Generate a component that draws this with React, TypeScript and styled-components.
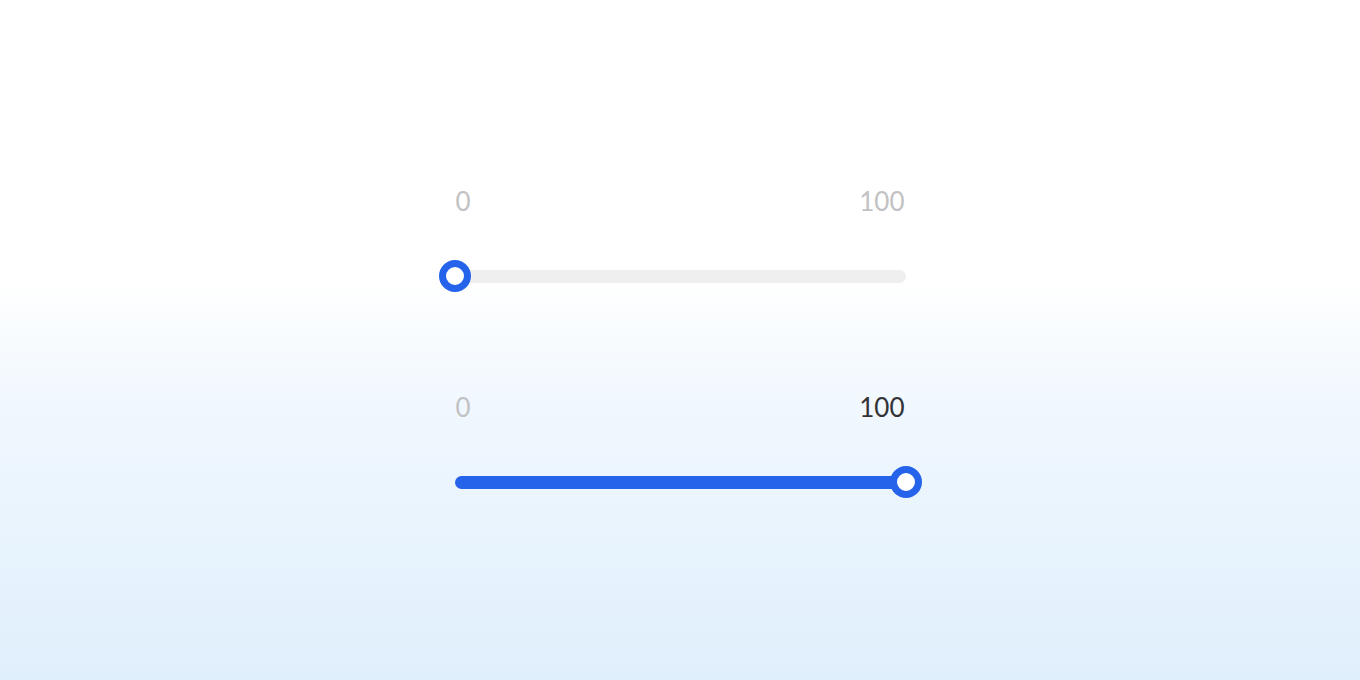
import React from "react";
import styled, { createGlobalStyle } from "styled-components";

const GlobalStyle = createGlobalStyle`
  html, body {
    margin: 0;
    padding: 0;
  }
  body {
    font-family: Lato, "Open Sans", sans-serif;
  }
`;

const Page = styled.main`
  width: 100%;
  min-height: 680px;
  display: flex;
  align-items: center;
  justify-content: center;
  background: linear-gradient(180deg, #ffffff 0%, #ffffff 41%, #f1f8fe 58%, #e0effc 100%);
`;

const Stack = styled.div`
  width: 451px;
  padding-top: 6px;
  display: flex;
  flex-direction: column;
  gap: 102px;
`;

const SliderBlock = styled.div`
  display: flex;
  flex-direction: column;
  gap: 46px;
`;

const Labels = styled.div`
  display: flex;
  justify-content: space-between;
  align-items: baseline;
  padding: 0 1px 0 1px;
`;

const Label = styled.span<{ $active?: boolean }>`
  font-size: 26px;
  line-height: 26px;
  font-weight: 400;
  color: ${(p) => (p.$active ? "#333336" : "#c2c2c4")};
`;

const TrackRow = styled.div`
  position: relative;
  height: 32px;
  display: flex;
  align-items: center;
`;

const Track = styled.div`
  position: relative;
  width: 100%;
  height: 13px;
  border-radius: 7px;
  background: #efefef;
`;

const Fill = styled.div`
  height: 100%;
  border-radius: 7px;
  background: #2563eb;
`;

const Thumb = styled.div`
  position: absolute;
  top: 50%;
  width: 32px;
  height: 32px;
  box-sizing: border-box;
  border-radius: 50%;
  border: 7px solid #2563eb;
  background: #ffffff;
  transform: translate(-50%, -50%);
`;

type SliderProps = { min: number; max: number; value: number };

function RangeSlider({ min, max, value }: SliderProps) {
  const pct = ((value - min) / (max - min)) * 100;
  return (
    <SliderBlock>
      <Labels>
        <Label>{min}</Label>
        <Label $active={value === max}>{max}</Label>
      </Labels>
      <TrackRow>
        <Track>
          <Fill style={{ width: `${pct}%` }} />
          <Thumb style={{ left: `${pct}%` }} />
        </Track>
      </TrackRow>
    </SliderBlock>
  );
}

export default function App() {
  return (
    <>
      <GlobalStyle />
      <Page>
        <Stack>
          <RangeSlider min={0} max={100} value={0} />
          <RangeSlider min={0} max={100} value={100} />
        </Stack>
      </Page>
    </>
  );
}
